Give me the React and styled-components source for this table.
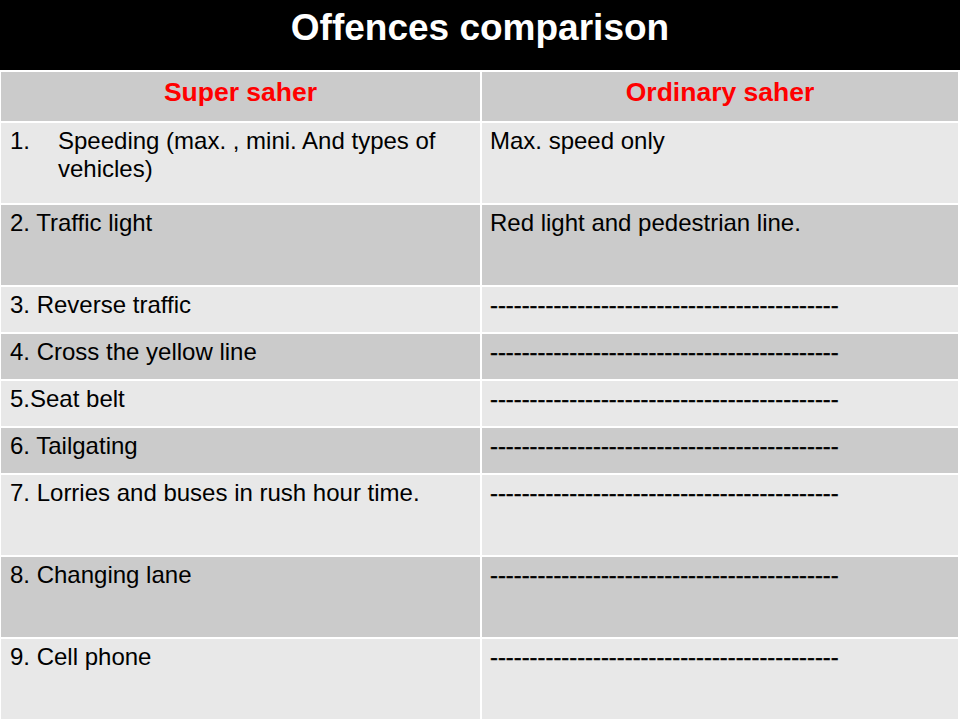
import styled, { createGlobalStyle } from "styled-components";

const GlobalStyle = createGlobalStyle`
  html, body {
    margin: 0;
    padding: 0;
    background: #ffffff;
  }
  body {
    font-family: "Liberation Sans", Arial, sans-serif;
  }
`;

const Slide = styled.div`
  width: 960px;
  height: 720px;
  overflow: hidden;
  background: #ffffff;
`;

const TitleBar = styled.h1`
  margin: 0;
  height: 70px;
  box-sizing: border-box;
  padding-top: 9px;
  background: #000000;
  color: #ffffff;
  font-size: 37px;
  line-height: 37px;
  font-weight: bold;
  text-align: center;
`;

const Table = styled.div`
  display: grid;
  grid-template-columns: 479px 1fr;
  column-gap: 2px;
  row-gap: 2px;
  padding: 2px 2px 0 1px;
`;

const HeadCell = styled.div`
  height: 49px;
  box-sizing: border-box;
  padding-top: 4px;
  background: #cbcbcb;
  color: #ff0000;
  font-size: 26.5px;
  line-height: 32px;
  font-weight: bold;
  text-align: center;
`;

const Cell = styled.div`
  height: ${(p) => (p.$tall ? 80 : 45)}px;
  box-sizing: border-box;
  padding: 4px 8px 0 ${(p) => (p.$right ? 8 : 9)}px;
  background: ${(p) => (p.$dark ? "#cbcbcb" : "#e8e8e8")};
  color: #000000;
  font-size: 24px;
  line-height: 28px;
`;

const ListItem = styled.div`
  display: flex;
`;

const Marker = styled.span`
  flex: 0 0 48px;
`;

const Dashes = styled.span`
  font-size: 23.8px;
  -webkit-text-stroke: 0.4px #000;
  white-space: nowrap;
`;

const DASH = "-".repeat(44);

const rows = [
  { left: "Speeding (max. , mini. And types of vehicles)", num: "1.", right: "Max. speed only", tall: true },
  { left: "2. Traffic light", right: "Red light and pedestrian line.", tall: true },
  { left: "3. Reverse traffic" },
  { left: "4. Cross the yellow line" },
  { left: "5.Seat belt" },
  { left: "6. Tailgating" },
  { left: "7. Lorries and buses in rush hour time.", tall: true },
  { left: "8. Changing lane", tall: true },
  { left: "9. Cell phone", tall: true },
];

export default function App() {
  return (
    <>
      <GlobalStyle />
      <Slide>
        <TitleBar>Offences comparison</TitleBar>
        <Table>
          <HeadCell>Super saher</HeadCell>
          <HeadCell>Ordinary saher</HeadCell>
          {rows.map((row, idx) => {
            const dark = idx % 2 === 1;
            return [
              <Cell key={`l${idx}`} $tall={row.tall} $dark={dark}>
                {row.num ? (
                  <ListItem>
                    <Marker>{row.num}</Marker>
                    <span>{row.left}</span>
                  </ListItem>
                ) : (
                  row.left
                )}
              </Cell>,
              <Cell key={`r${idx}`} $right $tall={row.tall} $dark={dark}>
                {row.right ? row.right : <Dashes>{DASH}</Dashes>}
              </Cell>,
            ];
          })}
        </Table>
      </Slide>
    </>
  );
}
